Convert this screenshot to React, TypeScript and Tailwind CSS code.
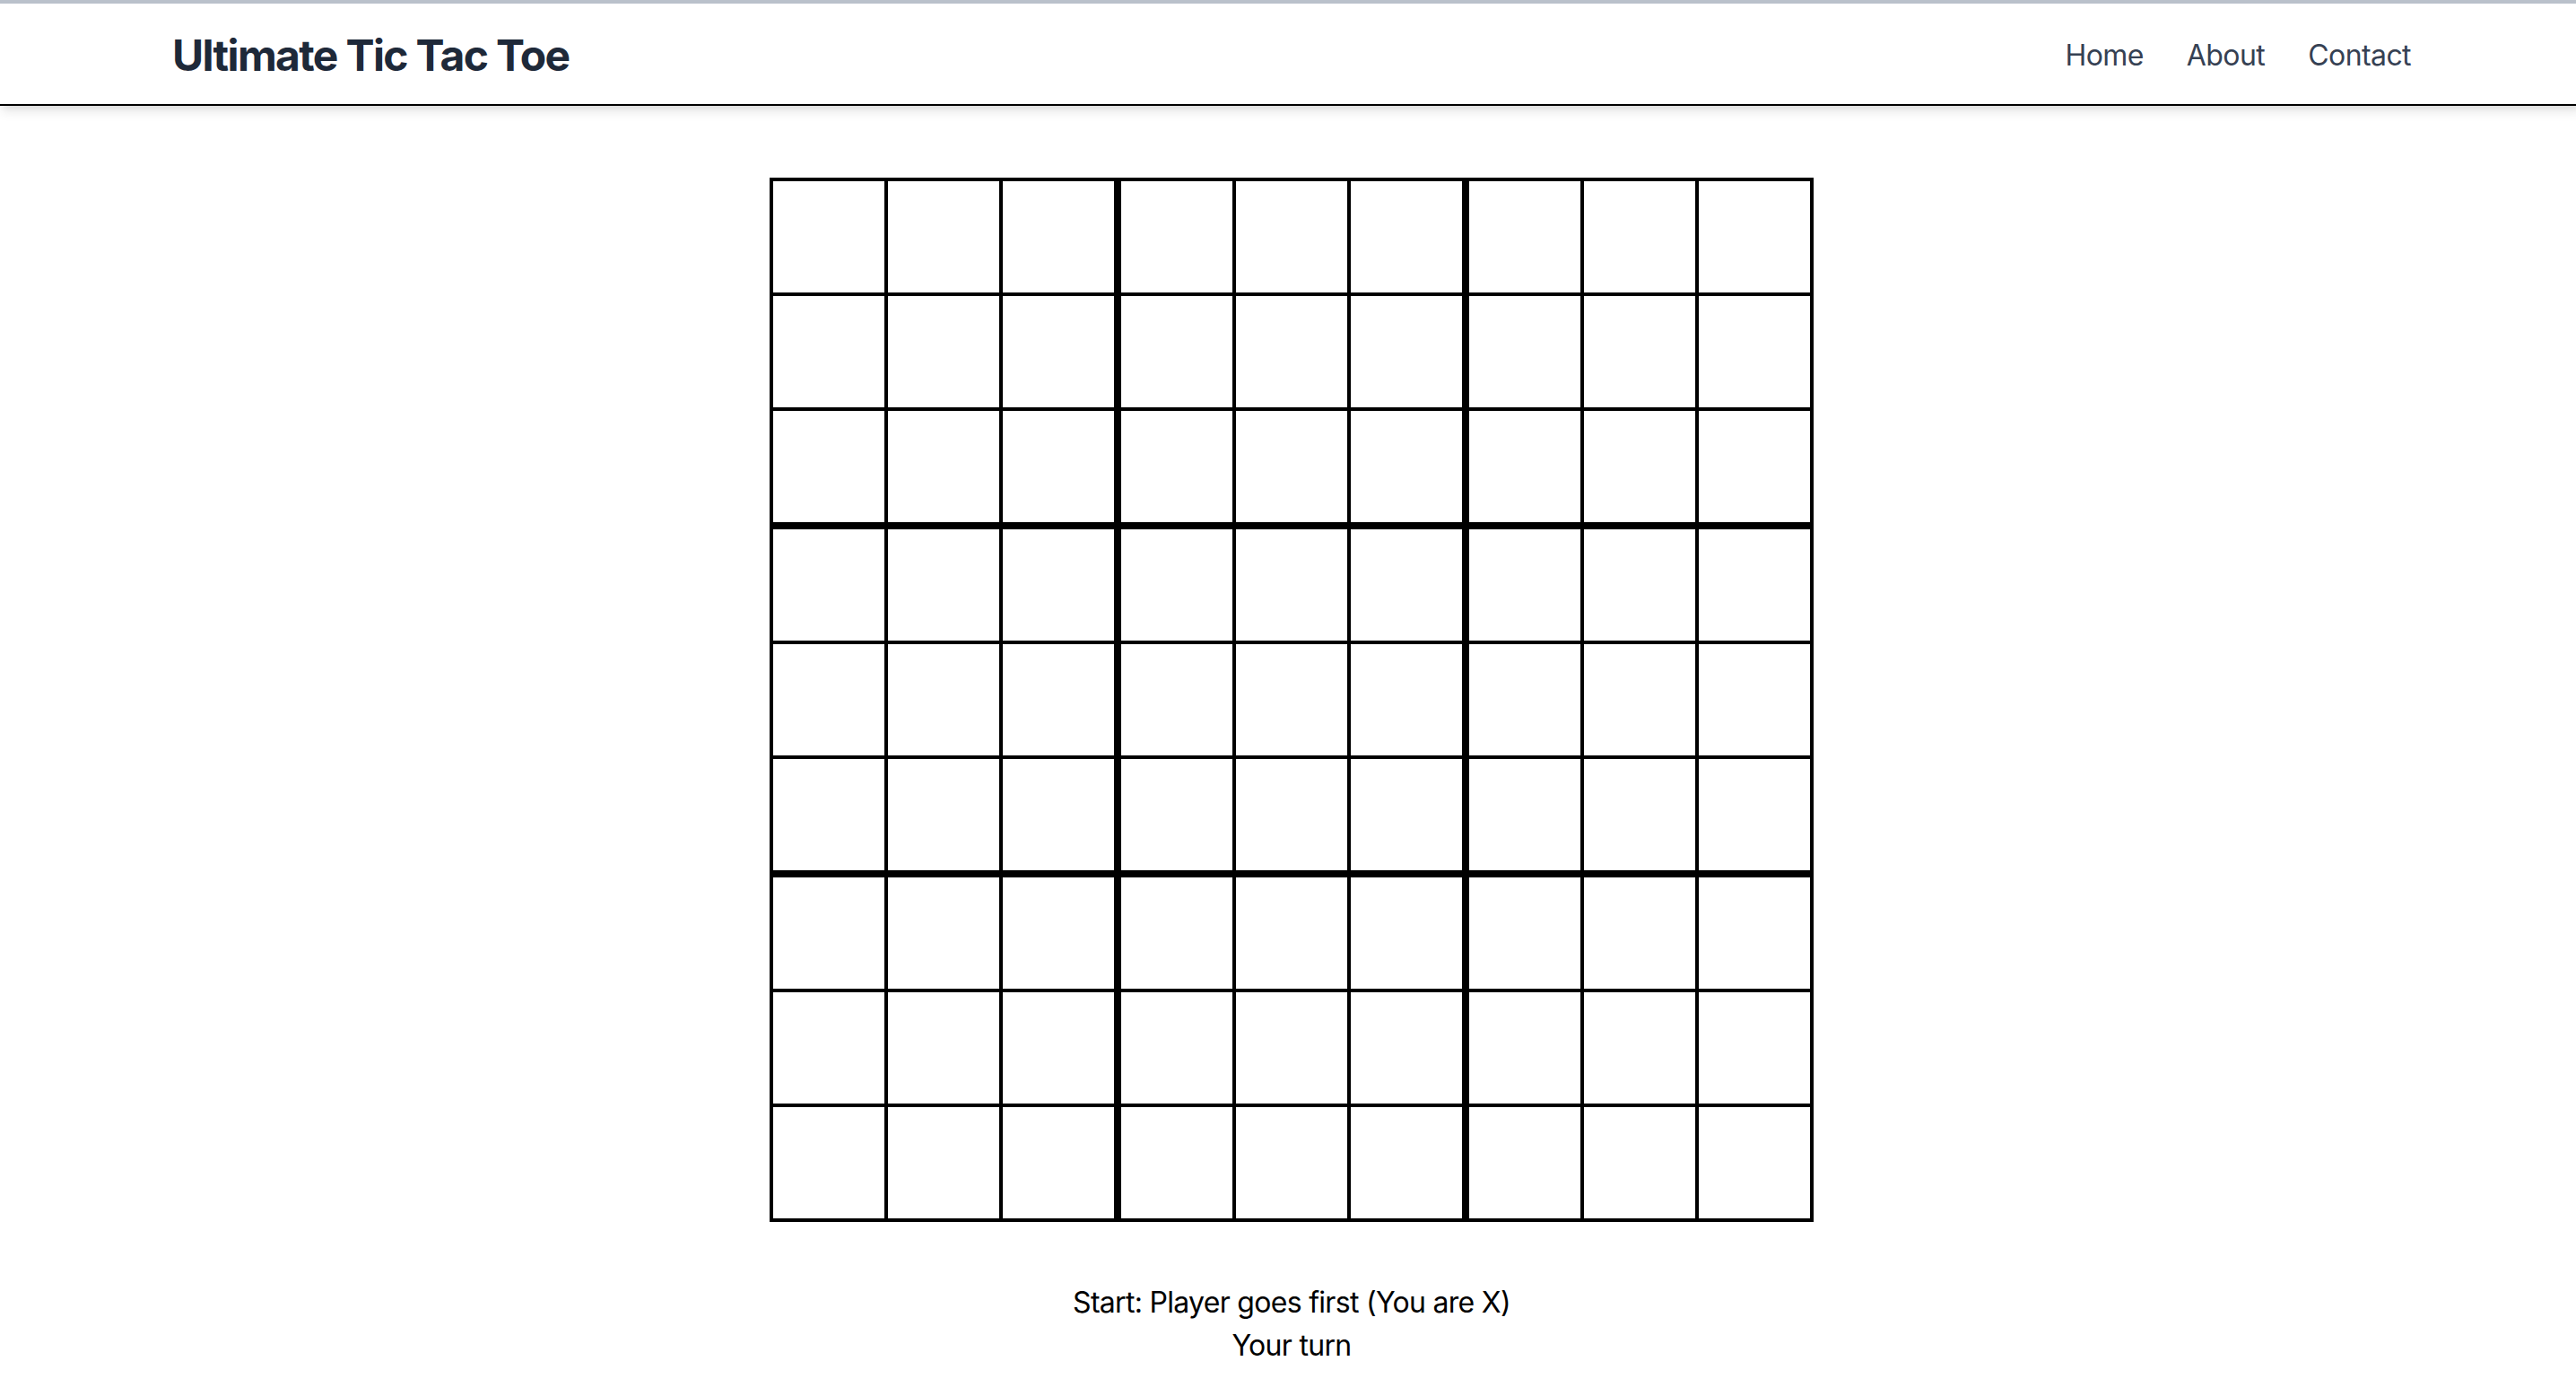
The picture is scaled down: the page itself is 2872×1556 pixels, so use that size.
import React from "react";

function SmallBoard() {
  return (
    <div className="grid grid-cols-3 border-2 border-black">
      {Array.from({ length: 9 }).map((_, i) => (
        <div key={i} className="w-32 h-32 border-2 border-black bg-white" />
      ))}
    </div>
  );
}

export default function App() {
  return (
    <div className="w-full overflow-hidden bg-white" style={{ fontFamily: "Inter, 'Noto Sans', sans-serif" }}>
      <div className="w-[2880px] bg-white pb-20">
        <nav className="border-t-4 border-t-[#bac1cb] border-b-2 border-b-black bg-white shadow-[0_8px_12px_-2px_rgba(0,0,0,0.1),0_4px_8px_-4px_rgba(0,0,0,0.1)]">
          <div className="max-w-[2560px] mx-auto px-8 h-[112px] pt-[4px] flex items-center justify-between">
            <div className="text-[48px] leading-[64px] font-bold tracking-[-0.034em] text-gray-800">
              Ultimate Tic Tac Toe
            </div>
            <div className="flex items-center gap-12 text-[32px] leading-[48px] tracking-[-0.018em] text-gray-700">
              <a href="#">Home</a>
              <a href="#">About</a>
              <a href="#">Contact</a>
            </div>
          </div>
        </nav>
        <main className="flex flex-col items-center pt-20">
          <div className="grid grid-cols-3">
            {Array.from({ length: 9 }).map((_, i) => (
              <SmallBoard key={i} />
            ))}
          </div>
          <div className="mt-[66px] text-center text-[32px] leading-[48px] tracking-[-0.022em] text-black">
            <p>Start: Player goes first (You are X)</p>
            <p>Your turn</p>
          </div>
        </main>
      </div>
    </div>
  );
}
